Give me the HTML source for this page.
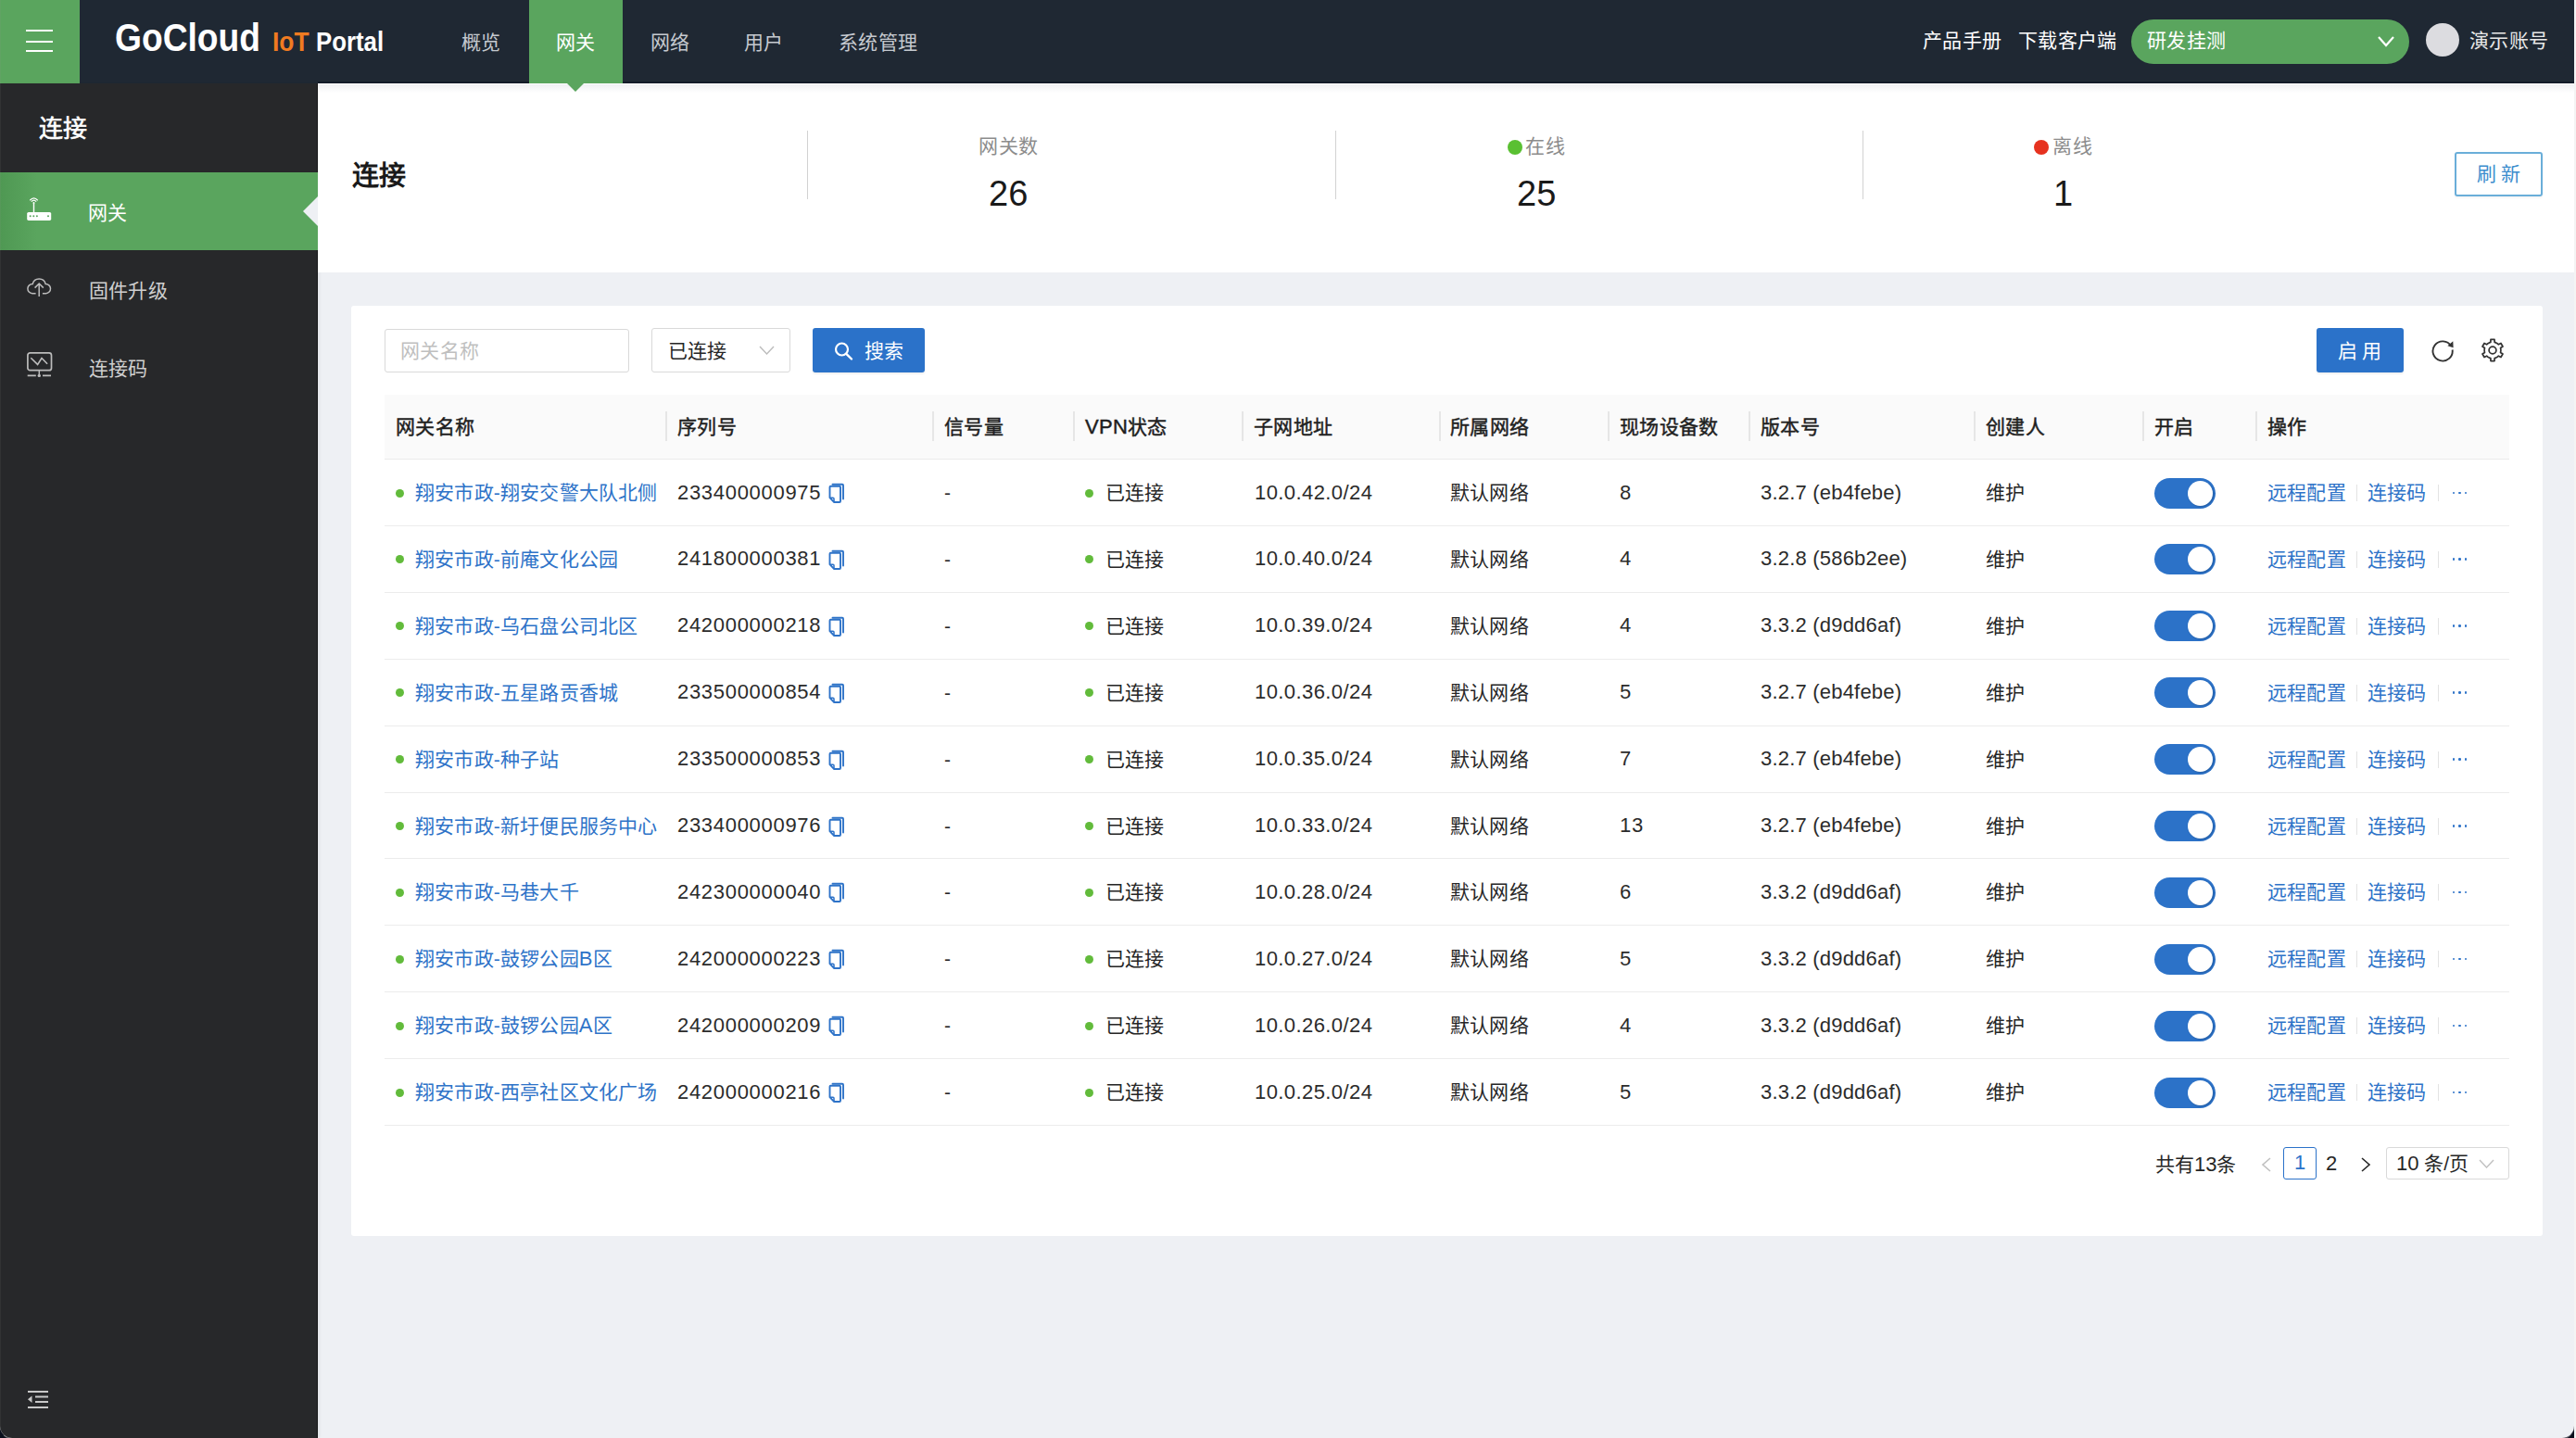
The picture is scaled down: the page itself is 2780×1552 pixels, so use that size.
<!DOCTYPE html><html lang="zh-CN"><head><meta charset="utf-8"><title>GoCloud IoT Portal</title><style>
*{box-sizing:border-box;margin:0;padding:0}
html,body{width:2780px;height:1552px;overflow:hidden}
body{position:relative;background:#0a0f1c;font-family:"Liberation Sans",sans-serif;color:#1f1f1f}
.a{position:absolute;white-space:nowrap}
#win{position:absolute;left:0;top:0;width:2778px;height:1552px;background:#eef0f4;border-radius:0 0 13px 13px;overflow:hidden}
#wb{position:absolute;left:0;top:0;width:2778px;height:1553px;border-radius:0 0 13px 13px;border-left:1px solid rgba(150,150,150,0.1);border-bottom:1px solid rgba(170,170,170,0.6);z-index:50}
#strip{position:absolute;left:2778px;top:0;width:2px;height:1552px;background:#f4f4f4}
#hdr{position:absolute;left:0;top:0;width:2778px;height:90px;background:#1f2833}
#hdrb{position:absolute;left:343px;top:88px;width:2435px;height:2px;background:#141c29}
#shd{position:absolute;left:343px;top:91px;width:2435px;height:9px;background:linear-gradient(#eff0f3,rgba(255,255,255,0))}
#ham{position:absolute;left:0;top:0;width:86px;height:90px;background:#5aa55e}
#ham i{position:absolute;left:28px;width:29px;height:2px;background:#fff}
.nav{position:absolute;top:1px;height:90px;line-height:90px;font-size:21px;color:#c5c9cf;letter-spacing:0.3px}
#tab{position:absolute;left:571px;top:0;width:101px;height:90px;background:#5aa55e}
#tabn{position:absolute;left:612px;top:90px;width:0;height:0;border-left:9px solid transparent;border-right:9px solid transparent;border-top:9px solid #5aa55e;z-index:5}
.hw{position:absolute;top:-1px;height:90px;line-height:90px;font-size:21px;color:#fff;letter-spacing:0.3px}
#pill{position:absolute;left:2300px;top:21px;width:300px;height:48px;border-radius:24px;background:#5aa55e}
#avatar{position:absolute;left:2618px;top:25px;width:36px;height:36px;border-radius:50%;background:#dcdce0}
#side{position:absolute;left:0;top:90px;width:343px;height:1462px;background:#27282a;border-right:1px solid #151617;box-shadow:2px 0 3px rgba(0,0,0,0.06)}
.si{position:absolute;left:96px;font-size:21px;line-height:30px;color:#cfcfcf;letter-spacing:0.2px;margin-top:1px}
#act{position:absolute;left:0;top:186px;width:343px;height:84px;background:linear-gradient(90deg,#4f9853 0,#5aa55e 40px,#5aa55e 100%)}
#actn{position:absolute;left:327px;top:212px;width:0;height:0;border-top:16.5px solid transparent;border-bottom:16.5px solid transparent;border-right:16px solid #eef0f4}
#stats{position:absolute;left:343px;top:90px;width:2435px;height:204px;background:#fff}
.vd{position:absolute;top:141px;width:1.2px;height:74px;background:#d2d2d2}
.lbl{position:absolute;font-size:21px;line-height:30px;color:#8c8c8c;letter-spacing:0.5px;margin-top:1px}
.num{position:absolute;font-size:38px;line-height:44px;color:#1a1a1a;margin-top:1.5px}
.dot{position:absolute;border-radius:50%}
#card{position:absolute;left:379px;top:330px;width:2365px;height:1004px;background:#fff;border-radius:3px}
.inp{position:absolute;border:1.5px solid #d9d9d9;border-radius:3px;background:#fff}
.btn{position:absolute;background:#2b72c9;border-radius:3px;color:#fff;font-size:21px;box-shadow:0 2px 2px rgba(0,0,0,0.06)}
.th{position:absolute;top:426px;left:415px;width:2293px;height:70px;background:#fafafa;border-bottom:1px solid #ebebeb}
.cd{position:absolute;top:444px;width:1.5px;height:32px;background:#e6e6e6}
.ht{position:absolute;top:446px;font-size:21px;line-height:30px;color:#1f1f1f;font-weight:400;-webkit-text-stroke:0.45px #1f1f1f;letter-spacing:0.3px}
.rd{position:absolute;left:415px;width:2293px;height:1px;background:#ececec}
.c{position:absolute;font-size:21px;line-height:30px;color:#262626;letter-spacing:0.2px}
.n{font-size:22px;letter-spacing:0.7px;margin-top:-0.5px;color:#2b2b2b}
.lk{color:#2e73c8}
.gd{position:absolute;width:9px;height:9px;border-radius:50%;background:#62bb3b}
.tg{position:absolute;width:66px;height:33px;border-radius:17px;background:#2c72c8}
.tg i{position:absolute;left:36px;top:3px;width:27px;height:27px;border-radius:50%;background:#fff;box-shadow:1px 1px 2px rgba(0,0,0,0.18)}
.sep{position:absolute;width:1px;height:18px;background:#e3e3e3}
.dd{position:absolute;width:2.6px;height:2.6px;border-radius:50%;background:#2e73c8}
</style></head><body>
<div id="win">
<div id="hdr"></div><div id="hdrb"></div>
<div id="ham"><i style="top:32px"></i><i style="top:43.5px"></i><i style="top:54px"></i></div>
<div class="a" style="left:124px;top:16px;font-size:42.5px;line-height:50px;font-weight:bold;color:#fff;transform:scaleX(0.875);transform-origin:0 0">GoCloud</div>
<div class="a" style="left:294px;top:28px;font-size:29px;line-height:34px;font-weight:bold;color:#f07b21;transform:scaleX(0.91);transform-origin:0 0">IoT</div>
<div class="a" style="left:341px;top:28px;font-size:29px;line-height:34px;font-weight:bold;color:#fff;transform:scaleX(0.89);transform-origin:0 0">Portal</div>
<div id="tab"></div><div id="tabn"></div>
<div class="nav" style="left:498px">概览</div>
<div class="nav" style="left:600px;color:#fff">网关</div>
<div class="nav" style="left:702px">网络</div>
<div class="nav" style="left:803px">用户</div>
<div class="nav" style="left:905px">系统管理</div>
<div class="hw" style="left:2075px">产品手册</div>
<div class="hw" style="left:2178px">下载客户端</div>
<div id="pill"></div>
<div class="hw" style="left:2317px">研发挂测</div>
<svg class="a" style="left:2565px;top:38px" width="20" height="14" viewBox="0 0 20 14"><path d="M2 2 L10 11 L18 2" fill="none" stroke="#fff" stroke-width="2.2"/></svg>
<div id="avatar"></div>
<div class="hw" style="left:2665px;color:#e8e8e8">演示账号</div>
<div id="side"></div>
<div class="a" style="left:42px;top:123px;font-size:26px;line-height:32px;color:#fff;-webkit-text-stroke:0.6px #fff">连接</div>
<div id="act"></div>
<div id="actn"></div>
<svg class="a" style="left:28px;top:211px" width="30" height="30" viewBox="0 0 30 30">
<path d="M4.3 5.2 Q8.5 0.6 12.7 5.2" fill="none" stroke="#fff" stroke-width="1.3"/>
<path d="M5.9 6.6 Q8.5 3.8 11.1 6.6" fill="none" stroke="#fff" stroke-width="1.3"/>
<circle cx="8.5" cy="8" r="1" fill="#fff"/>
<rect x="7.8" y="8.3" width="1.4" height="10" fill="#fff"/>
<rect x="1.2" y="17.9" width="26" height="9" rx="1.6" fill="#fff"/>
<circle cx="4.7" cy="22.3" r="1" fill="#5aa55e"/><circle cx="8.3" cy="22.3" r="1" fill="#5aa55e"/><circle cx="11.9" cy="22.3" r="1" fill="#5aa55e"/><circle cx="24" cy="22.3" r="1" fill="#5aa55e"/>
</svg>
<div class="si" style="left:95px;top:214px;color:#fff">网关</div>
<svg class="a" style="left:28px;top:297px" width="30" height="26" viewBox="0 0 30 26">
<path d="M10.6 19.7 H6.8 A5.1 5.1 0 0 1 7.2 9.5 A7.2 7.2 0 0 1 21.2 9.5 A5.1 5.1 0 0 1 21.6 19.7 H17.9" fill="none" stroke="#bcbcbc" stroke-width="1.5"/>
<path d="M14.2 23 V9.3 M9.6 13.6 L14.2 9 L18.8 13.6" fill="none" stroke="#bcbcbc" stroke-width="1.5"/>
</svg>
<div class="si" style="top:298px">固件升级</div>
<svg class="a" style="left:28px;top:378px" width="30" height="30" viewBox="0 0 30 30">
<rect x="1.9" y="2.9" width="25.6" height="18.8" rx="2.5" fill="none" stroke="#bcbcbc" stroke-width="1.7"/>
<path d="M5.3 8.3 L12.6 15.4 L17 8.5 L23.1 14.7" fill="none" stroke="#bcbcbc" stroke-width="1.6"/>
<path d="M14.3 21.8 V26" stroke="#bcbcbc" stroke-width="1.5"/>
<path d="M1.7 27.4 H10.8 M18 27.4 H27" stroke="#bcbcbc" stroke-width="1.8"/>
<circle cx="14.3" cy="27.4" r="1.7" fill="#bcbcbc"/>
</svg>
<div class="si" style="top:382px">连接码</div>
<svg class="a" style="left:30px;top:1500px" width="23" height="22" viewBox="0 0 23 22">
<rect x="0" y="1" width="22" height="2" fill="#c8c8c8"/>
<rect x="8" y="6.5" width="14" height="2" fill="#c8c8c8"/>
<rect x="8" y="12" width="14" height="2" fill="#c8c8c8"/>
<rect x="0" y="18" width="22" height="2" fill="#c8c8c8"/>
<path d="M0 10.2 L4.5 6.5 V14 Z" fill="#c8c8c8"/>
</svg>
<div id="stats"></div><div id="shd"></div>
<div class="a" style="left:380px;top:172px;font-size:29px;line-height:36px;font-weight:bold;color:#1a1a1a">连接</div>
<div class="vd" style="left:871px"></div>
<div class="vd" style="left:1441px"></div>
<div class="vd" style="left:2010px"></div>
<div class="lbl" style="left:1056px;top:142px">网关数</div>
<div class="num" style="left:1067px;top:185px">26</div>
<div class="dot" style="left:1627px;top:151px;width:16px;height:16px;background:#5ac032"></div>
<div class="lbl" style="left:1646px;top:142px">在线</div>
<div class="num" style="left:1637px;top:185px">25</div>
<div class="dot" style="left:2195px;top:151px;width:16px;height:16px;background:#e6321f"></div>
<div class="lbl" style="left:2215px;top:142px">离线</div>
<div class="num" style="left:2216px;top:185px">1</div>
<div class="a" style="left:2649px;top:163.5px;width:95px;height:48px;border:2px solid #6aaed9;border-radius:3px;box-shadow:0 2px 2px rgba(0,0,0,0.04)"></div>
<div class="a" style="left:2673px;top:173px;font-size:21px;line-height:30px;color:#3b8dcd;letter-spacing:5px">刷新</div>
<div id="card"></div>
<div class="inp" style="left:415px;top:355px;width:264px;height:47px"></div>
<div class="a" style="left:432px;top:364px;font-size:21px;line-height:30px;color:#bfbfbf;letter-spacing:0.3px">网关名称</div>
<div class="inp" style="left:703px;top:354px;width:150px;height:48px"></div>
<div class="a" style="left:721px;top:364px;font-size:21px;line-height:30px;color:#262626">已连接</div>
<svg class="a" style="left:818px;top:370px" width="19" height="16" viewBox="0 0 19 16"><path d="M2 4 L9.5 12 L17 4" fill="none" stroke="#bcbcbc" stroke-width="1.4"/></svg>
<div class="btn" style="left:877px;top:354px;width:121px;height:48px"></div>
<svg class="a" style="left:899px;top:368px" width="24" height="22" viewBox="0 0 24 22"><circle cx="9.5" cy="9" r="6.5" fill="none" stroke="#fff" stroke-width="2.2"/><path d="M14.3 13.8 L20 19.5" stroke="#fff" stroke-width="2.4" stroke-linecap="round"/></svg>
<div class="a" style="left:933px;top:364px;font-size:21px;line-height:30px;color:#fff">搜索</div>
<div class="btn" style="left:2500px;top:354px;width:94px;height:48px"></div>
<div class="a" style="left:2523px;top:364px;font-size:21px;line-height:30px;color:#fff;letter-spacing:5px">启用</div>
<svg class="a" style="left:2622px;top:362.5px" width="28" height="28" viewBox="0 0 28 28"><path d="M23.2 10.5 A10.6 10.6 0 1 0 24.6 14.5" fill="none" stroke="#333" stroke-width="1.9"/><path d="M25.3 5.2 L25.6 12.2 L19.4 10.2 Z" fill="#333"/></svg>
<svg class="a" style="left:2677px;top:365px" width="26" height="26" viewBox="0 0 24 24"><path fill="none" stroke="#333" stroke-width="1.6" stroke-linejoin="round" d="M8.66 4.51 L10.02 4.04 L10.12 1.36 L13.88 1.36 L13.98 4.04 L15.34 4.51 L16.82 5.37 L17.90 6.30 L20.27 5.06 L22.15 8.31 L19.88 9.74 L20.16 11.14 L20.16 12.86 L19.88 14.26 L22.15 15.69 L20.27 18.94 L17.90 17.70 L16.82 18.63 L15.34 19.49 L13.98 19.96 L13.88 22.64 L10.12 22.64 L10.02 19.96 L8.66 19.49 L7.18 18.63 L6.10 17.70 L3.73 18.94 L1.85 15.69 L4.12 14.26 L3.84 12.86 L3.84 11.14 L4.12 9.74 L1.85 8.31 L3.73 5.06 L6.10 6.30 L7.18 5.37 Z"/><circle cx="12" cy="12" r="3.6" fill="none" stroke="#333" stroke-width="1.6"/></svg>
<div class="th"></div>
<div class="cd" style="left:718px"></div>
<div class="cd" style="left:1006px"></div>
<div class="cd" style="left:1158px"></div>
<div class="cd" style="left:1340px"></div>
<div class="cd" style="left:1553px"></div>
<div class="cd" style="left:1735px"></div>
<div class="cd" style="left:1887px"></div>
<div class="cd" style="left:2130px"></div>
<div class="cd" style="left:2312px"></div>
<div class="cd" style="left:2434px"></div>
<div class="ht" style="left:427px">网关名称</div>
<div class="ht" style="left:731px">序列号</div>
<div class="ht" style="left:1019px">信号量</div>
<div class="ht" style="left:1171px"><span style="font-size:22px">VPN</span>状态</div>
<div class="ht" style="left:1353px">子网地址</div>
<div class="ht" style="left:1565px">所属网络</div>
<div class="ht" style="left:1748px">现场设备数</div>
<div class="ht" style="left:1900px">版本号</div>
<div class="ht" style="left:2143px">创建人</div>
<div class="ht" style="left:2325px">开启</div>
<div class="ht" style="left:2447px">操作</div>
<div class="gd" style="left:427px;top:527.5px"></div>
<div class="c lk" style="left:448px;top:517.0px">翔安市政-翔安交警大队北侧</div>
<div class="c n" style="left:731px;top:517.0px">233400000975</div>
<div class="a" style="left:893px;top:520.0px"><svg width="20" height="24" viewBox="0 0 20 24"><path d="M5.5 2.8 H16 a1 1 0 0 1 1 1 V18.5" fill="none" stroke="#2e73c8" stroke-width="1.9" stroke-linecap="round"/><path d="M2.5 5.8 a1 1 0 0 1 1 -1 H13 a1 1 0 0 1 1 1 V21 a1 1 0 0 1 -1 1 H7.2 L2.5 17.2 Z" fill="none" stroke="#2e73c8" stroke-width="1.9" stroke-linejoin="round"/><path d="M2.8 17.2 H6 a1 1 0 0 1 1 1 V21.8" fill="none" stroke="#2e73c8" stroke-width="1.5"/></svg></div>
<div class="c" style="left:1019px;top:517.0px">-</div>
<div class="gd" style="left:1171px;top:527.5px"></div>
<div class="c" style="left:1193px;top:517.0px">已连接</div>
<div class="c n" style="left:1354px;top:517.0px;letter-spacing:0.42px">10.0.42.0/24</div>
<div class="c" style="left:1565px;top:517.0px">默认网络</div>
<div class="c n" style="left:1748px;top:517.0px">8</div>
<div class="c n" style="left:1900px;top:517.0px;letter-spacing:0.2px">3.2.7 (eb4febe)</div>
<div class="c" style="left:2143px;top:517.0px">维护</div>
<div class="tg" style="left:2325px;top:515.5px"><i></i></div>
<div class="c lk" style="left:2447px;top:517.0px">远程配置</div>
<div class="sep" style="left:2543px;top:523.0px"></div>
<div class="c lk" style="left:2555px;top:517.0px">连接码</div>
<div class="sep" style="left:2631px;top:523.0px"></div>
<div class="dd" style="left:2646.5px;top:530.5px"></div>
<div class="dd" style="left:2653px;top:530.5px"></div>
<div class="dd" style="left:2659.5px;top:530.5px"></div>
<div class="rd" style="top:566.9px"></div>
<div class="gd" style="left:427px;top:599.4px"></div>
<div class="c lk" style="left:448px;top:588.9px">翔安市政-前庵文化公园</div>
<div class="c n" style="left:731px;top:588.9px">241800000381</div>
<div class="a" style="left:893px;top:591.9px"><svg width="20" height="24" viewBox="0 0 20 24"><path d="M5.5 2.8 H16 a1 1 0 0 1 1 1 V18.5" fill="none" stroke="#2e73c8" stroke-width="1.9" stroke-linecap="round"/><path d="M2.5 5.8 a1 1 0 0 1 1 -1 H13 a1 1 0 0 1 1 1 V21 a1 1 0 0 1 -1 1 H7.2 L2.5 17.2 Z" fill="none" stroke="#2e73c8" stroke-width="1.9" stroke-linejoin="round"/><path d="M2.8 17.2 H6 a1 1 0 0 1 1 1 V21.8" fill="none" stroke="#2e73c8" stroke-width="1.5"/></svg></div>
<div class="c" style="left:1019px;top:588.9px">-</div>
<div class="gd" style="left:1171px;top:599.4px"></div>
<div class="c" style="left:1193px;top:588.9px">已连接</div>
<div class="c n" style="left:1354px;top:588.9px;letter-spacing:0.42px">10.0.40.0/24</div>
<div class="c" style="left:1565px;top:588.9px">默认网络</div>
<div class="c n" style="left:1748px;top:588.9px">4</div>
<div class="c n" style="left:1900px;top:588.9px;letter-spacing:0.2px">3.2.8 (586b2ee)</div>
<div class="c" style="left:2143px;top:588.9px">维护</div>
<div class="tg" style="left:2325px;top:587.4px"><i></i></div>
<div class="c lk" style="left:2447px;top:588.9px">远程配置</div>
<div class="sep" style="left:2543px;top:594.9px"></div>
<div class="c lk" style="left:2555px;top:588.9px">连接码</div>
<div class="sep" style="left:2631px;top:594.9px"></div>
<div class="dd" style="left:2646.5px;top:602.4px"></div>
<div class="dd" style="left:2653px;top:602.4px"></div>
<div class="dd" style="left:2659.5px;top:602.4px"></div>
<div class="rd" style="top:638.8px"></div>
<div class="gd" style="left:427px;top:671.3px"></div>
<div class="c lk" style="left:448px;top:660.8px">翔安市政-乌石盘公司北区</div>
<div class="c n" style="left:731px;top:660.8px">242000000218</div>
<div class="a" style="left:893px;top:663.8px"><svg width="20" height="24" viewBox="0 0 20 24"><path d="M5.5 2.8 H16 a1 1 0 0 1 1 1 V18.5" fill="none" stroke="#2e73c8" stroke-width="1.9" stroke-linecap="round"/><path d="M2.5 5.8 a1 1 0 0 1 1 -1 H13 a1 1 0 0 1 1 1 V21 a1 1 0 0 1 -1 1 H7.2 L2.5 17.2 Z" fill="none" stroke="#2e73c8" stroke-width="1.9" stroke-linejoin="round"/><path d="M2.8 17.2 H6 a1 1 0 0 1 1 1 V21.8" fill="none" stroke="#2e73c8" stroke-width="1.5"/></svg></div>
<div class="c" style="left:1019px;top:660.8px">-</div>
<div class="gd" style="left:1171px;top:671.3px"></div>
<div class="c" style="left:1193px;top:660.8px">已连接</div>
<div class="c n" style="left:1354px;top:660.8px;letter-spacing:0.42px">10.0.39.0/24</div>
<div class="c" style="left:1565px;top:660.8px">默认网络</div>
<div class="c n" style="left:1748px;top:660.8px">4</div>
<div class="c n" style="left:1900px;top:660.8px;letter-spacing:0.2px">3.3.2 (d9dd6af)</div>
<div class="c" style="left:2143px;top:660.8px">维护</div>
<div class="tg" style="left:2325px;top:659.3px"><i></i></div>
<div class="c lk" style="left:2447px;top:660.8px">远程配置</div>
<div class="sep" style="left:2543px;top:666.8px"></div>
<div class="c lk" style="left:2555px;top:660.8px">连接码</div>
<div class="sep" style="left:2631px;top:666.8px"></div>
<div class="dd" style="left:2646.5px;top:674.3px"></div>
<div class="dd" style="left:2653px;top:674.3px"></div>
<div class="dd" style="left:2659.5px;top:674.3px"></div>
<div class="rd" style="top:710.7px"></div>
<div class="gd" style="left:427px;top:743.2px"></div>
<div class="c lk" style="left:448px;top:732.7px">翔安市政-五星路贡香城</div>
<div class="c n" style="left:731px;top:732.7px">233500000854</div>
<div class="a" style="left:893px;top:735.7px"><svg width="20" height="24" viewBox="0 0 20 24"><path d="M5.5 2.8 H16 a1 1 0 0 1 1 1 V18.5" fill="none" stroke="#2e73c8" stroke-width="1.9" stroke-linecap="round"/><path d="M2.5 5.8 a1 1 0 0 1 1 -1 H13 a1 1 0 0 1 1 1 V21 a1 1 0 0 1 -1 1 H7.2 L2.5 17.2 Z" fill="none" stroke="#2e73c8" stroke-width="1.9" stroke-linejoin="round"/><path d="M2.8 17.2 H6 a1 1 0 0 1 1 1 V21.8" fill="none" stroke="#2e73c8" stroke-width="1.5"/></svg></div>
<div class="c" style="left:1019px;top:732.7px">-</div>
<div class="gd" style="left:1171px;top:743.2px"></div>
<div class="c" style="left:1193px;top:732.7px">已连接</div>
<div class="c n" style="left:1354px;top:732.7px;letter-spacing:0.42px">10.0.36.0/24</div>
<div class="c" style="left:1565px;top:732.7px">默认网络</div>
<div class="c n" style="left:1748px;top:732.7px">5</div>
<div class="c n" style="left:1900px;top:732.7px;letter-spacing:0.2px">3.2.7 (eb4febe)</div>
<div class="c" style="left:2143px;top:732.7px">维护</div>
<div class="tg" style="left:2325px;top:731.2px"><i></i></div>
<div class="c lk" style="left:2447px;top:732.7px">远程配置</div>
<div class="sep" style="left:2543px;top:738.7px"></div>
<div class="c lk" style="left:2555px;top:732.7px">连接码</div>
<div class="sep" style="left:2631px;top:738.7px"></div>
<div class="dd" style="left:2646.5px;top:746.2px"></div>
<div class="dd" style="left:2653px;top:746.2px"></div>
<div class="dd" style="left:2659.5px;top:746.2px"></div>
<div class="rd" style="top:782.6px"></div>
<div class="gd" style="left:427px;top:815.1px"></div>
<div class="c lk" style="left:448px;top:804.6px">翔安市政-种子站</div>
<div class="c n" style="left:731px;top:804.6px">233500000853</div>
<div class="a" style="left:893px;top:807.6px"><svg width="20" height="24" viewBox="0 0 20 24"><path d="M5.5 2.8 H16 a1 1 0 0 1 1 1 V18.5" fill="none" stroke="#2e73c8" stroke-width="1.9" stroke-linecap="round"/><path d="M2.5 5.8 a1 1 0 0 1 1 -1 H13 a1 1 0 0 1 1 1 V21 a1 1 0 0 1 -1 1 H7.2 L2.5 17.2 Z" fill="none" stroke="#2e73c8" stroke-width="1.9" stroke-linejoin="round"/><path d="M2.8 17.2 H6 a1 1 0 0 1 1 1 V21.8" fill="none" stroke="#2e73c8" stroke-width="1.5"/></svg></div>
<div class="c" style="left:1019px;top:804.6px">-</div>
<div class="gd" style="left:1171px;top:815.1px"></div>
<div class="c" style="left:1193px;top:804.6px">已连接</div>
<div class="c n" style="left:1354px;top:804.6px;letter-spacing:0.42px">10.0.35.0/24</div>
<div class="c" style="left:1565px;top:804.6px">默认网络</div>
<div class="c n" style="left:1748px;top:804.6px">7</div>
<div class="c n" style="left:1900px;top:804.6px;letter-spacing:0.2px">3.2.7 (eb4febe)</div>
<div class="c" style="left:2143px;top:804.6px">维护</div>
<div class="tg" style="left:2325px;top:803.1px"><i></i></div>
<div class="c lk" style="left:2447px;top:804.6px">远程配置</div>
<div class="sep" style="left:2543px;top:810.6px"></div>
<div class="c lk" style="left:2555px;top:804.6px">连接码</div>
<div class="sep" style="left:2631px;top:810.6px"></div>
<div class="dd" style="left:2646.5px;top:818.1px"></div>
<div class="dd" style="left:2653px;top:818.1px"></div>
<div class="dd" style="left:2659.5px;top:818.1px"></div>
<div class="rd" style="top:854.5px"></div>
<div class="gd" style="left:427px;top:887.0px"></div>
<div class="c lk" style="left:448px;top:876.5px">翔安市政-新圩便民服务中心</div>
<div class="c n" style="left:731px;top:876.5px">233400000976</div>
<div class="a" style="left:893px;top:879.5px"><svg width="20" height="24" viewBox="0 0 20 24"><path d="M5.5 2.8 H16 a1 1 0 0 1 1 1 V18.5" fill="none" stroke="#2e73c8" stroke-width="1.9" stroke-linecap="round"/><path d="M2.5 5.8 a1 1 0 0 1 1 -1 H13 a1 1 0 0 1 1 1 V21 a1 1 0 0 1 -1 1 H7.2 L2.5 17.2 Z" fill="none" stroke="#2e73c8" stroke-width="1.9" stroke-linejoin="round"/><path d="M2.8 17.2 H6 a1 1 0 0 1 1 1 V21.8" fill="none" stroke="#2e73c8" stroke-width="1.5"/></svg></div>
<div class="c" style="left:1019px;top:876.5px">-</div>
<div class="gd" style="left:1171px;top:887.0px"></div>
<div class="c" style="left:1193px;top:876.5px">已连接</div>
<div class="c n" style="left:1354px;top:876.5px;letter-spacing:0.42px">10.0.33.0/24</div>
<div class="c" style="left:1565px;top:876.5px">默认网络</div>
<div class="c n" style="left:1748px;top:876.5px">13</div>
<div class="c n" style="left:1900px;top:876.5px;letter-spacing:0.2px">3.2.7 (eb4febe)</div>
<div class="c" style="left:2143px;top:876.5px">维护</div>
<div class="tg" style="left:2325px;top:875.0px"><i></i></div>
<div class="c lk" style="left:2447px;top:876.5px">远程配置</div>
<div class="sep" style="left:2543px;top:882.5px"></div>
<div class="c lk" style="left:2555px;top:876.5px">连接码</div>
<div class="sep" style="left:2631px;top:882.5px"></div>
<div class="dd" style="left:2646.5px;top:890.0px"></div>
<div class="dd" style="left:2653px;top:890.0px"></div>
<div class="dd" style="left:2659.5px;top:890.0px"></div>
<div class="rd" style="top:926.4px"></div>
<div class="gd" style="left:427px;top:958.9px"></div>
<div class="c lk" style="left:448px;top:948.4px">翔安市政-马巷大千</div>
<div class="c n" style="left:731px;top:948.4px">242300000040</div>
<div class="a" style="left:893px;top:951.4px"><svg width="20" height="24" viewBox="0 0 20 24"><path d="M5.5 2.8 H16 a1 1 0 0 1 1 1 V18.5" fill="none" stroke="#2e73c8" stroke-width="1.9" stroke-linecap="round"/><path d="M2.5 5.8 a1 1 0 0 1 1 -1 H13 a1 1 0 0 1 1 1 V21 a1 1 0 0 1 -1 1 H7.2 L2.5 17.2 Z" fill="none" stroke="#2e73c8" stroke-width="1.9" stroke-linejoin="round"/><path d="M2.8 17.2 H6 a1 1 0 0 1 1 1 V21.8" fill="none" stroke="#2e73c8" stroke-width="1.5"/></svg></div>
<div class="c" style="left:1019px;top:948.4px">-</div>
<div class="gd" style="left:1171px;top:958.9px"></div>
<div class="c" style="left:1193px;top:948.4px">已连接</div>
<div class="c n" style="left:1354px;top:948.4px;letter-spacing:0.42px">10.0.28.0/24</div>
<div class="c" style="left:1565px;top:948.4px">默认网络</div>
<div class="c n" style="left:1748px;top:948.4px">6</div>
<div class="c n" style="left:1900px;top:948.4px;letter-spacing:0.2px">3.3.2 (d9dd6af)</div>
<div class="c" style="left:2143px;top:948.4px">维护</div>
<div class="tg" style="left:2325px;top:946.9px"><i></i></div>
<div class="c lk" style="left:2447px;top:948.4px">远程配置</div>
<div class="sep" style="left:2543px;top:954.4px"></div>
<div class="c lk" style="left:2555px;top:948.4px">连接码</div>
<div class="sep" style="left:2631px;top:954.4px"></div>
<div class="dd" style="left:2646.5px;top:961.9px"></div>
<div class="dd" style="left:2653px;top:961.9px"></div>
<div class="dd" style="left:2659.5px;top:961.9px"></div>
<div class="rd" style="top:998.3px"></div>
<div class="gd" style="left:427px;top:1030.8px"></div>
<div class="c lk" style="left:448px;top:1020.3px">翔安市政-鼓锣公园<span style="font-size:22px">B</span>区</div>
<div class="c n" style="left:731px;top:1020.3px">242000000223</div>
<div class="a" style="left:893px;top:1023.3px"><svg width="20" height="24" viewBox="0 0 20 24"><path d="M5.5 2.8 H16 a1 1 0 0 1 1 1 V18.5" fill="none" stroke="#2e73c8" stroke-width="1.9" stroke-linecap="round"/><path d="M2.5 5.8 a1 1 0 0 1 1 -1 H13 a1 1 0 0 1 1 1 V21 a1 1 0 0 1 -1 1 H7.2 L2.5 17.2 Z" fill="none" stroke="#2e73c8" stroke-width="1.9" stroke-linejoin="round"/><path d="M2.8 17.2 H6 a1 1 0 0 1 1 1 V21.8" fill="none" stroke="#2e73c8" stroke-width="1.5"/></svg></div>
<div class="c" style="left:1019px;top:1020.3px">-</div>
<div class="gd" style="left:1171px;top:1030.8px"></div>
<div class="c" style="left:1193px;top:1020.3px">已连接</div>
<div class="c n" style="left:1354px;top:1020.3px;letter-spacing:0.42px">10.0.27.0/24</div>
<div class="c" style="left:1565px;top:1020.3px">默认网络</div>
<div class="c n" style="left:1748px;top:1020.3px">5</div>
<div class="c n" style="left:1900px;top:1020.3px;letter-spacing:0.2px">3.3.2 (d9dd6af)</div>
<div class="c" style="left:2143px;top:1020.3px">维护</div>
<div class="tg" style="left:2325px;top:1018.8px"><i></i></div>
<div class="c lk" style="left:2447px;top:1020.3px">远程配置</div>
<div class="sep" style="left:2543px;top:1026.3px"></div>
<div class="c lk" style="left:2555px;top:1020.3px">连接码</div>
<div class="sep" style="left:2631px;top:1026.3px"></div>
<div class="dd" style="left:2646.5px;top:1033.8px"></div>
<div class="dd" style="left:2653px;top:1033.8px"></div>
<div class="dd" style="left:2659.5px;top:1033.8px"></div>
<div class="rd" style="top:1070.2px"></div>
<div class="gd" style="left:427px;top:1102.7px"></div>
<div class="c lk" style="left:448px;top:1092.2px">翔安市政-鼓锣公园<span style="font-size:22px">A</span>区</div>
<div class="c n" style="left:731px;top:1092.2px">242000000209</div>
<div class="a" style="left:893px;top:1095.2px"><svg width="20" height="24" viewBox="0 0 20 24"><path d="M5.5 2.8 H16 a1 1 0 0 1 1 1 V18.5" fill="none" stroke="#2e73c8" stroke-width="1.9" stroke-linecap="round"/><path d="M2.5 5.8 a1 1 0 0 1 1 -1 H13 a1 1 0 0 1 1 1 V21 a1 1 0 0 1 -1 1 H7.2 L2.5 17.2 Z" fill="none" stroke="#2e73c8" stroke-width="1.9" stroke-linejoin="round"/><path d="M2.8 17.2 H6 a1 1 0 0 1 1 1 V21.8" fill="none" stroke="#2e73c8" stroke-width="1.5"/></svg></div>
<div class="c" style="left:1019px;top:1092.2px">-</div>
<div class="gd" style="left:1171px;top:1102.7px"></div>
<div class="c" style="left:1193px;top:1092.2px">已连接</div>
<div class="c n" style="left:1354px;top:1092.2px;letter-spacing:0.42px">10.0.26.0/24</div>
<div class="c" style="left:1565px;top:1092.2px">默认网络</div>
<div class="c n" style="left:1748px;top:1092.2px">4</div>
<div class="c n" style="left:1900px;top:1092.2px;letter-spacing:0.2px">3.3.2 (d9dd6af)</div>
<div class="c" style="left:2143px;top:1092.2px">维护</div>
<div class="tg" style="left:2325px;top:1090.7px"><i></i></div>
<div class="c lk" style="left:2447px;top:1092.2px">远程配置</div>
<div class="sep" style="left:2543px;top:1098.2px"></div>
<div class="c lk" style="left:2555px;top:1092.2px">连接码</div>
<div class="sep" style="left:2631px;top:1098.2px"></div>
<div class="dd" style="left:2646.5px;top:1105.7px"></div>
<div class="dd" style="left:2653px;top:1105.7px"></div>
<div class="dd" style="left:2659.5px;top:1105.7px"></div>
<div class="rd" style="top:1142.1px"></div>
<div class="gd" style="left:427px;top:1174.6px"></div>
<div class="c lk" style="left:448px;top:1164.1px">翔安市政-西亭社区文化广场</div>
<div class="c n" style="left:731px;top:1164.1px">242000000216</div>
<div class="a" style="left:893px;top:1167.1px"><svg width="20" height="24" viewBox="0 0 20 24"><path d="M5.5 2.8 H16 a1 1 0 0 1 1 1 V18.5" fill="none" stroke="#2e73c8" stroke-width="1.9" stroke-linecap="round"/><path d="M2.5 5.8 a1 1 0 0 1 1 -1 H13 a1 1 0 0 1 1 1 V21 a1 1 0 0 1 -1 1 H7.2 L2.5 17.2 Z" fill="none" stroke="#2e73c8" stroke-width="1.9" stroke-linejoin="round"/><path d="M2.8 17.2 H6 a1 1 0 0 1 1 1 V21.8" fill="none" stroke="#2e73c8" stroke-width="1.5"/></svg></div>
<div class="c" style="left:1019px;top:1164.1px">-</div>
<div class="gd" style="left:1171px;top:1174.6px"></div>
<div class="c" style="left:1193px;top:1164.1px">已连接</div>
<div class="c n" style="left:1354px;top:1164.1px;letter-spacing:0.42px">10.0.25.0/24</div>
<div class="c" style="left:1565px;top:1164.1px">默认网络</div>
<div class="c n" style="left:1748px;top:1164.1px">5</div>
<div class="c n" style="left:1900px;top:1164.1px;letter-spacing:0.2px">3.3.2 (d9dd6af)</div>
<div class="c" style="left:2143px;top:1164.1px">维护</div>
<div class="tg" style="left:2325px;top:1162.6px"><i></i></div>
<div class="c lk" style="left:2447px;top:1164.1px">远程配置</div>
<div class="sep" style="left:2543px;top:1170.1px"></div>
<div class="c lk" style="left:2555px;top:1164.1px">连接码</div>
<div class="sep" style="left:2631px;top:1170.1px"></div>
<div class="dd" style="left:2646.5px;top:1177.6px"></div>
<div class="dd" style="left:2653px;top:1177.6px"></div>
<div class="dd" style="left:2659.5px;top:1177.6px"></div>
<div class="rd" style="top:1214.0px"></div>
<div class="a" style="left:2326px;top:1242px;font-size:21px;line-height:30px;color:#262626">共有<span style="font-size:22px">13</span>条</div>
<svg class="a" style="left:2438px;top:1247px" width="16" height="20" viewBox="0 0 16 20"><path d="M12 3 L4 10 L12 17" fill="none" stroke="#c0c0c0" stroke-width="1.6"/></svg>
<div class="a" style="left:2464px;top:1238px;width:36px;height:35px;border:1.5px solid #2b72c9;border-radius:3px;text-align:center;line-height:32px;font-size:22px;color:#2b72c9">1</div>
<div class="a" style="left:2510px;top:1241px;font-size:22px;line-height:30px;color:#262626">2</div>
<svg class="a" style="left:2545px;top:1247px" width="16" height="20" viewBox="0 0 16 20"><path d="M4 3 L12 10 L4 17" fill="none" stroke="#262626" stroke-width="1.6"/></svg>
<div class="inp" style="left:2575px;top:1238px;width:133px;height:35px"></div>
<div class="a" style="left:2586px;top:1241px;font-size:21px;line-height:30px;color:#262626"><span style="font-size:22px">10</span> 条/页</div>
<svg class="a" style="left:2674px;top:1248px" width="19" height="16" viewBox="0 0 19 16"><path d="M2 4 L9.5 12 L17 4" fill="none" stroke="#c0c0c0" stroke-width="1.4"/></svg>
</div>
<div id="wb"></div>
<div id="strip"></div>
</body></html>
